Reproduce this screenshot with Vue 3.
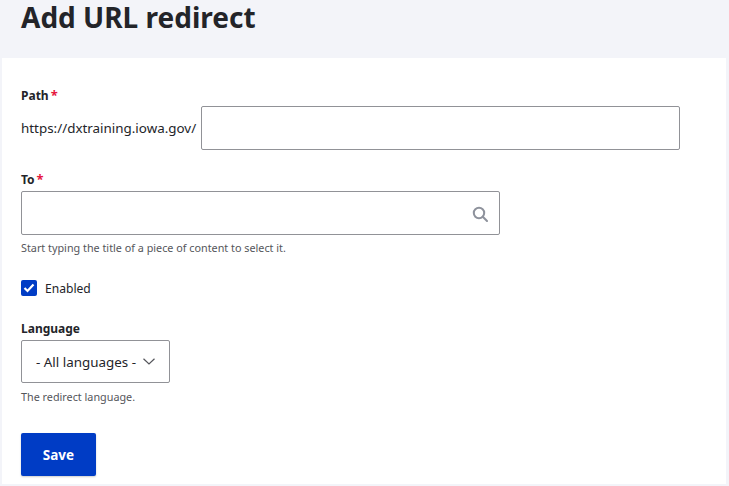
<script setup>
const pathHost = 'https://dxtraining.iowa.gov/'
</script>

<template>
  <div class="page">
    <h1 class="title">Add URL redirect</h1>
    <form class="card" @submit.prevent>
      <div class="field path">
        <div class="label">Path<span class="req">*</span></div>
        <div class="path-row">
          <span class="prefix">{{ pathHost }}</span>
          <input class="input path-input" type="text" />
        </div>
      </div>
      <div class="field to">
        <div class="label">To<span class="req">*</span></div>
        <div class="to-wrap">
          <input class="input to-input" type="text" />
          <svg class="search" width="16" height="16" viewBox="0 0 16 16" fill="none" stroke="#8e929c" stroke-width="2">
            <circle cx="7" cy="7" r="5.2" />
            <path d="M10.8 10.8 15 15" stroke-linecap="round" />
          </svg>
        </div>
        <div class="help">Start typing the title of a piece of content to select it.</div>
      </div>
      <label class="check">
        <span class="box">
          <svg width="12" height="10" viewBox="0 0 12 10" fill="none" stroke="#fff" stroke-width="2.2">
            <path d="M1.5 5 4.5 8 10.5 1.5" />
          </svg>
        </span>
        <span class="check-text">Enabled</span>
      </label>
      <div class="field lang">
        <div class="label">Language</div>
        <div class="select">
          <span>- All languages -</span>
          <svg width="12" height="7" viewBox="0 0 12 7" fill="none" stroke="#55565b" stroke-width="1.2">
            <path d="M.5 .7 6 6 11.5 .7" />
          </svg>
        </div>
        <div class="help">The redirect language.</div>
      </div>
      <button class="save" type="button">Save</button>
    </form>
  </div>
</template>

<style scoped>
.page {
  width: 729px;
  height: 486px;
  background: #f3f4f9;
  overflow: hidden;
  font-family: "Noto Sans", "Open Sans", sans-serif;
  color: #232429;
  box-sizing: border-box;
  padding-left: 2px;
}
.title {
  margin: 0;
  height: 58px;
  box-sizing: border-box;
  padding-left: 19px;
  font-size: 28px;
  line-height: 35px;
  font-weight: 700;
}
.card {
  width: 724px;
  height: 426px;
  background: #fff;
  box-sizing: border-box;
  padding: 28px 0 0 19px;
}
.field { display: flex; flex-direction: column; align-items: flex-start; }
.label {
  font-size: 12px;
  line-height: 18px;
  font-weight: 700;
}
.req { color: #e6173f; margin-left: 2px; font-size: 13px; }
.path-row { display: flex; align-items: center; margin-top: 1px; }
.prefix { font-size: 13.4px; width: 180px; white-space: nowrap; }
.input {
  display: block;
  box-sizing: border-box;
  height: 44px;
  background: #fff;
  border: 1px solid #919297;
  border-radius: 2px;
  outline: none;
  padding: 0;
}
.path-input { width: 479px; }
.to { margin-top: 20px; }
.to-wrap { position: relative; margin-top: 2px; }
.to-input { width: 479px; }
.search { position: absolute; right: 12px; top: 15px; }
.help {
  font-size: 10.8px;
  line-height: 14px;
  color: #55565b;
  margin-top: 6px;
}
.check {
  display: flex;
  align-items: center;
  margin-top: 24px;
  height: 18px;
}
.box {
  width: 16px;
  height: 16px;
  background: #003cc5;
  border-radius: 2px;
  display: flex;
  align-items: center;
  justify-content: center;
}
.check-text { font-size: 12.1px; margin-left: 8px; }
.lang { margin-top: 23px; }
.select {
  box-sizing: border-box;
  width: 149px;
  height: 43px;
  margin-top: 2px;
  border: 1px solid #919297;
  border-radius: 2px;
  display: flex;
  align-items: center;
  justify-content: space-between;
  padding: 0 14px 0 14px;
  font-size: 13.4px;
  white-space: nowrap;
}
.lang .help { margin-top: 7px; }
.save {
  display: block;
  margin-top: 29px;
  width: 75px;
  height: 43px;
  background: #003cc5;
  color: #fff;
  border: 0;
  border-radius: 2px;
  box-shadow: 0 1px 2px rgba(0, 0, 0, 0.2);
  font-family: inherit;
  font-size: 13.5px;
  font-weight: 700;
  padding: 0;
}
</style>
